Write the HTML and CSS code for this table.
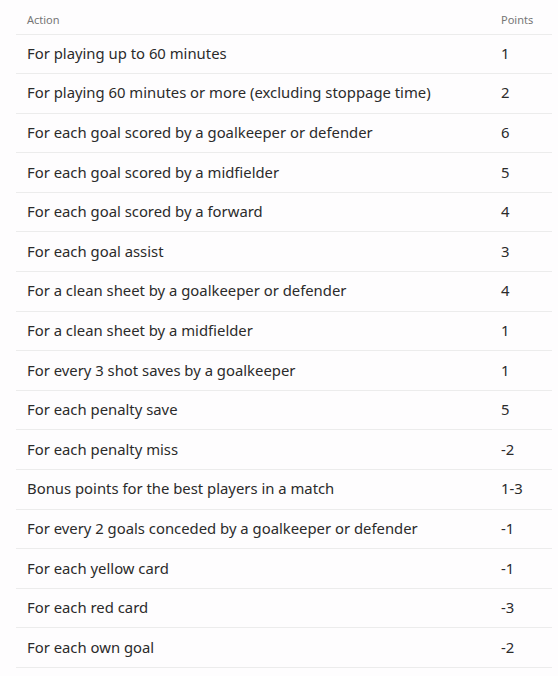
FILE: index.html
```html
<!DOCTYPE html>
<html>
<head>
<meta charset="utf-8">
<link rel="stylesheet" href="styles.css">
</head>
<body>
<table class="scoring">
  <thead>
    <tr><th class="action">Action</th><th class="points">Points</th></tr>
  </thead>
  <tbody>
    <tr><td class="action">For playing up to 60 minutes</td><td class="points">1</td></tr>
    <tr><td class="action">For playing 60 minutes or more (excluding stoppage time)</td><td class="points">2</td></tr>
    <tr><td class="action">For each goal scored by a goalkeeper or defender</td><td class="points">6</td></tr>
    <tr><td class="action">For each goal scored by a midfielder</td><td class="points">5</td></tr>
    <tr><td class="action">For each goal scored by a forward</td><td class="points">4</td></tr>
    <tr><td class="action">For each goal assist</td><td class="points">3</td></tr>
    <tr><td class="action">For a clean sheet by a goalkeeper or defender</td><td class="points">4</td></tr>
    <tr><td class="action">For a clean sheet by a midfielder</td><td class="points">1</td></tr>
    <tr><td class="action">For every 3 shot saves by a goalkeeper</td><td class="points">1</td></tr>
    <tr><td class="action">For each penalty save</td><td class="points">5</td></tr>
    <tr><td class="action">For each penalty miss</td><td class="points">-2</td></tr>
    <tr><td class="action">Bonus points for the best players in a match</td><td class="points">1-3</td></tr>
    <tr><td class="action">For every 2 goals conceded by a goalkeeper or defender</td><td class="points">-1</td></tr>
    <tr><td class="action">For each yellow card</td><td class="points">-1</td></tr>
    <tr><td class="action">For each red card</td><td class="points">-3</td></tr>
    <tr><td class="action">For each own goal</td><td class="points">-2</td></tr>
  </tbody>
</table>
</body>
</html>
```
FILE: styles.css
```css
html, body {
  margin: 0;
  padding: 0;
  background: #fefdfe;
}
body {
  font-family: "Noto Sans", "Open Sans", sans-serif;
  color: #2b2b2b;
}
.scoring {
  margin: 0 6px 0 16px;
  width: 536px;
  border-collapse: collapse;
}
.scoring th {
  font-weight: 400;
  font-size: 11px;
  color: #767676;
  text-align: left;
  height: 34px;
  padding: 5px 0 0 11px;
  box-sizing: border-box;
  vertical-align: middle;
}
.scoring td {
  font-size: 14.85px;
  height: 39.6px;
  padding: 0 0 2px 11px;
  box-sizing: border-box;
  border-top: 1px solid #ececec;
  vertical-align: middle;
}
.scoring tbody tr:last-child td {
  border-bottom: 1px solid #ececec;
}
.scoring .points {
  width: 51px;
  padding-left: 0;
}
```
